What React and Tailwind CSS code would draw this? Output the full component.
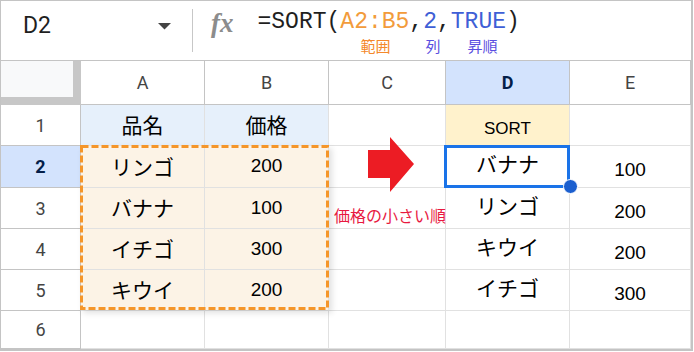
import React from 'react';

const jp = { fontFamily: '"Noto Sans CJK JP", "Noto Sans", sans-serif' };
const num = { fontFamily: '"Liberation Sans", Arial, sans-serif' };
const ui = { fontFamily: 'Roboto, "Liberation Sans", sans-serif' };
const mono = { fontFamily: '"Liberation Mono", "DejaVu Sans Mono", monospace' };

const rows = [
  { n: 1, a: '品名', b: '価格', head: true },
  { n: 2, a: 'リンゴ', b: '200', d: 'バナナ', e: '100' },
  { n: 3, a: 'バナナ', b: '100', d: 'リンゴ', e: '200', note: true },
  { n: 4, a: 'イチゴ', b: '300', d: 'キウイ', e: '200' },
  { n: 5, a: 'キウイ', b: '200', d: 'イチゴ', e: '300' },
  { n: 6 },
];

const cell = 'flex items-center justify-center border-r border-b border-[#e1e1e1]';

const FormulaBar = () => (
  <div className="flex h-[60px] border-b border-[#c4c4c4]">
    <div className="flex w-[191px] items-center justify-between pl-[22px] pr-[21px] pb-[8px]">
      <span className="text-[23px] text-[#1f1f1f]" style={ui}>D2</span>
      <svg width="13" height="7" viewBox="0 0 13 7">
        <polygon points="0,0 13,0 6.5,6.5" fill="#444" />
      </svg>
    </div>
    <div className="my-[8px] w-px bg-[#c7c7c7]" />
    <div className="flex items-start pt-[8px]">
      <span
        className="ml-[18px] mr-[24px] text-[27px] leading-[28px] font-bold italic text-[#8c8c8c]"
        style={{ fontFamily: '"Liberation Serif", serif' }}
      >
        fx
      </span>
      <div className="flex flex-col">
        <div className="text-[23px] leading-[26px] text-[#1f1f1f]" style={mono}>
          =SORT(<span className="text-[#f29b3b]">A2:B5</span>,<span className="text-[#3f5fd6]">2</span>,
          <span className="text-[#3f5fd6]">TRUE</span>)
        </div>
        <div className="flex text-[15px] leading-[22px]" style={jp}>
          <span className="ml-[103px] text-[#f4882b]">範囲</span>
          <span className="ml-[35px] text-[#5a4fe0]">列</span>
          <span className="ml-[27px] text-[#5a4fe0]">昇順</span>
        </div>
      </div>
    </div>
  </div>
);

const App = () => {
  return (
    <div className="h-[351px] w-[693px] overflow-hidden border-l border-t border-r-2 border-b-2 border-[#c4c4c4] bg-white">
      <FormulaBar />
      <div className="relative grid grid-cols-[80px_124px_124px_117px_124px_1fr] grid-rows-[44px_41px_42px_41px_41px_41px_1fr] h-[288px]">
        {/* column headers */}
        <div className="border-r-[8px] border-b-[8px] border-[#c7c7c7] bg-[#f8f9fa]" />
        {['A', 'B', 'C', 'D', 'E'].map((c) => (
          <div
            key={c}
            className={`flex items-center justify-center border-r border-b border-[#c4c4c4] text-[18px] ${
              c === 'D' ? 'bg-[#d3e3fd] font-bold text-[#041e49]' : 'text-[#444]'
            }`}
            style={ui}
          >
            {c}
          </div>
        ))}

        {rows.map((r) => (
          <React.Fragment key={r.n}>
            <div
              className={`flex items-center justify-center border-r border-b border-[#c4c4c4] text-[18px] ${
                r.n === 2 ? 'bg-[#d3e3fd] font-bold text-[#041e49]' : 'text-[#444]'
              }`}
              style={ui}
            >
              {r.n}
            </div>
            <div
              className={`${cell} text-[21px] text-black ${
                r.head ? 'bg-[#e6f0fb]' : r.a ? 'bg-[#fcf3e6]' : ''
              }`}
              style={jp}
            >
              {r.a}
            </div>
            <div
              className={`${cell} ${r.head ? 'bg-[#e6f0fb] text-[21px]' : r.b ? 'bg-[#fcf3e6] text-[19px]' : ''} text-black`}
              style={r.head ? jp : num}
            >
              {r.b}
            </div>
            <div className={`${cell} ${r.note ? '!items-end !justify-start pb-[3px] pl-[5px]' : ''}`}>
              {r.note && (
                <span className="whitespace-nowrap text-[16px] leading-[20px] text-[#e8193f]" style={jp}>
                  価格の小さい順
                </span>
              )}
            </div>
            <div
              className={`${cell} ${r.head ? 'bg-[#fff2cc] pt-[7px] text-[17px]' : 'pb-[5px] text-[21px]'} text-black`}
              style={r.head ? num : jp}
            >
              {r.head ? 'SORT' : r.d}
            </div>
            <div className={`${cell} pt-[8px] text-[19px] text-black`} style={num}>
              {r.e}
            </div>
          </React.Fragment>
        ))}

        {/* copied range A2:B5 */}
        <div className="pointer-events-none absolute left-[79px] top-[84px] h-[165px] w-[249px] shadow-[3px_3px_6px_rgba(0,0,0,0.12)]">
          <svg width="249" height="165" className="block">
            <rect
              x="1.5"
              y="1.5"
              width="246"
              height="162"
              fill="none"
              stroke="#f5962a"
              strokeWidth="3"
              strokeDasharray="7 3"
            />
          </svg>
        </div>

        {/* arrow */}
        <svg className="absolute left-[367px] top-[76px]" width="46" height="55" viewBox="0 0 46 55">
          <polygon points="0,13 22,13 22,0 46,27 22,55 22,41 0,41" fill="#ec1c24" />
        </svg>

        {/* active cell D2 */}
        <div className="pointer-events-none absolute left-[443px] top-[84px] h-[43px] w-[126px] border-[3px] border-[#1a73e8]" />
        <div className="absolute left-[562px] top-[118px] h-[15px] w-[15px] rounded-full border border-white bg-[#1b5fcf]" />
      </div>
    </div>
  );
};

export default App;
